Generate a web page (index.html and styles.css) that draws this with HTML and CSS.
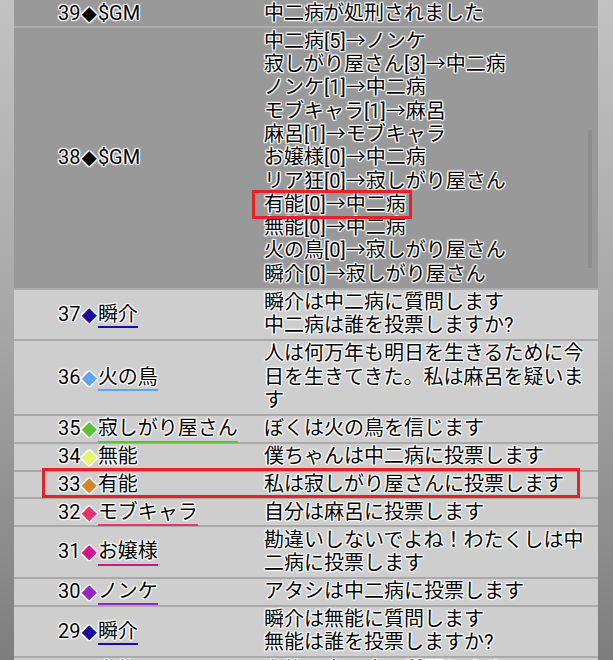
FILE: index.html
```html
<!DOCTYPE html>
<html lang="ja">
<head>
  <meta charset="UTF-8" />
  <meta name="viewport" content="width=device-width, initial-scale=1.0" />
  <title>ログ</title>
  <link rel="stylesheet" href="styles.css">
</head>
<body>

  <div class="page">
    <table class="log">
      <tr class="gm">
        <td class="who">39<span class="dia">◆</span>$GM</td>
        <td class="msg">中二病が処刑されました</td>
      </tr>
      <tr class="gm">
        <td class="who">38<span class="dia">◆</span>$GM</td>
        <td class="msg">
          中二病[5]→ノンケ<br>
          寂しがり屋さん[3]→中二病<br>
          ノンケ[1]→中二病<br>
          モブキャラ[1]→麻呂<br>
          麻呂[1]→モブキャラ<br>
          お嬢様[0]→中二病<br>
          リア狂[0]→寂しがり屋さん<br>
          有能[0]→中二病<br>
          無能[0]→中二病<br>
          火の鳥[0]→寂しがり屋さん<br>
          瞬介[0]→寂しがり屋さん
          <div class="scroll"></div>
        </td>
      </tr>
      <tr>
        <td class="who">37<span class="dia c-shun">◆</span><span class="name c-shun">瞬介</span></td>
        <td class="msg">瞬介は中二病に質問します<br>中二病は誰を投票しますか?</td>
      </tr>
      <tr>
        <td class="who">36<span class="dia c-hinotori">◆</span><span class="name c-hinotori">火の鳥</span></td>
        <td class="msg">人は何万年も明日を生きるために今日を生きてきた。私は麻呂を疑います</td>
      </tr>
      <tr>
        <td class="who">35<span class="dia c-sabishi">◆</span><span class="name c-sabishi">寂しがり屋さん</span></td>
        <td class="msg">ぼくは火の鳥を信じます</td>
      </tr>
      <tr>
        <td class="who">34<span class="dia c-muno">◆</span><span class="name plain">無能</span></td>
        <td class="msg">僕ちゃんは中二病に投票します</td>
      </tr>
      <tr>
        <td class="who">33<span class="dia c-yuno">◆</span><span class="name c-yuno">有能</span></td>
        <td class="msg">私は寂しがり屋さんに投票します</td>
      </tr>
      <tr>
        <td class="who">32<span class="dia c-mob">◆</span><span class="name c-mob">モブキャラ</span></td>
        <td class="msg">自分は麻呂に投票します</td>
      </tr>
      <tr>
        <td class="who">31<span class="dia c-ojou">◆</span><span class="name c-ojou">お嬢様</span></td>
        <td class="msg">勘違いしないでよね！わたくしは中二病に投票します</td>
      </tr>
      <tr>
        <td class="who">30<span class="dia c-nonke">◆</span><span class="name c-nonke">ノンケ</span></td>
        <td class="msg">アタシは中二病に投票します</td>
      </tr>
      <tr>
        <td class="who">29<span class="dia c-shun">◆</span><span class="name c-shun">瞬介</span></td>
        <td class="msg">瞬介は無能に質問します<br>無能は誰を投票しますか?</td>
      </tr>
      <tr>
        <td class="who">28<span class="dia c-yuno">◆</span><span class="name c-yuno">有能</span></td>
        <td class="msg">有能は中二病に質問します</td>
      </tr>
    </table>

    <!-- red annotation boxes -->
    <div class="mark mark-vote"></div>
    <div class="mark mark-row"></div>
  </div>

</body>
</html>
```

FILE: styles.css
```css
* {
  margin: 0;
  padding: 0;
  box-sizing: border-box;
}
html, body {
  height: 100%;
}
body {
  font-family: Roboto, 'Noto Sans CJK JP', sans-serif;
  font-size: 20px;
  color: #000;
  background: linear-gradient(to bottom, #c2c2c2 0%, #a6a6a6 50%, #7e7e7e 100%);
  overflow: hidden;
}
.page {
  position: relative;
  padding-left: 14px;
}
.log {
  width: 584px;
  border-collapse: collapse;
  table-layout: fixed;
}
.log td {
  background: #cecece;
  border-bottom: 2px solid #a9a9a9;
  padding: 1.2px 0;
  line-height: 23.5px;
  vertical-align: middle;
  text-shadow: 1px 0 1px #fff, -1px 0 1px #fff, 0 1px 1px #fff, 0 -1px 1px #fff,
    1px 1px 1px #fff, -1px -1px 1px #fff, 1px -1px 1px #fff, -1px 1px 1px #fff;
}
.log .gm td {
  background: #999;
  padding: 1.5px 0;
  line-height: 23.3px;
  border-bottom-color: #adadad;
}
.who {
  width: 250px;
  padding-left: 44px !important;
  white-space: nowrap;
}
.msg {
  width: 334px;
  position: relative;
}
.dia {
  font-family: 'DejaVu Sans', sans-serif;
  font-size: 20px;
  margin: 0 1px;
}
.name {
  padding-bottom: 0.5px;
  border-bottom: 2px solid currentColor;
  color: #000 !important;
}
.name.plain {
  border-bottom: none;
}
.scroll {
  position: absolute;
  right: 6px;
  top: 102px;
  width: 4px;
  height: 138px;
  background: #8e8e8e;
}

.c-shun { color: #1c0c9e; border-color: #1c0c9e !important; }
.c-hinotori { color: #5fa3f3; border-color: #5fa3f3 !important; }
.c-sabishi { color: #58c23a; border-color: #58c23a !important; }
.c-muno { color: #e4f46c; }
.c-yuno { color: #d4862a; border-color: #d4862a !important; }
.c-mob { color: #e8336e; border-color: #e8336e !important; }
.c-ojou { color: #d2158e; border-color: #d2158e !important; }
.c-nonke { color: #9526c4; border-color: #9526c4 !important; }

.mark {
  position: absolute;
  border: 3px solid #e8202a;
}
.mark-vote {
  left: 252px;
  top: 190px;
  width: 160px;
  height: 29px;
}
.mark-row {
  left: 42px;
  top: 468px;
  width: 538px;
  height: 30px;
}
```
